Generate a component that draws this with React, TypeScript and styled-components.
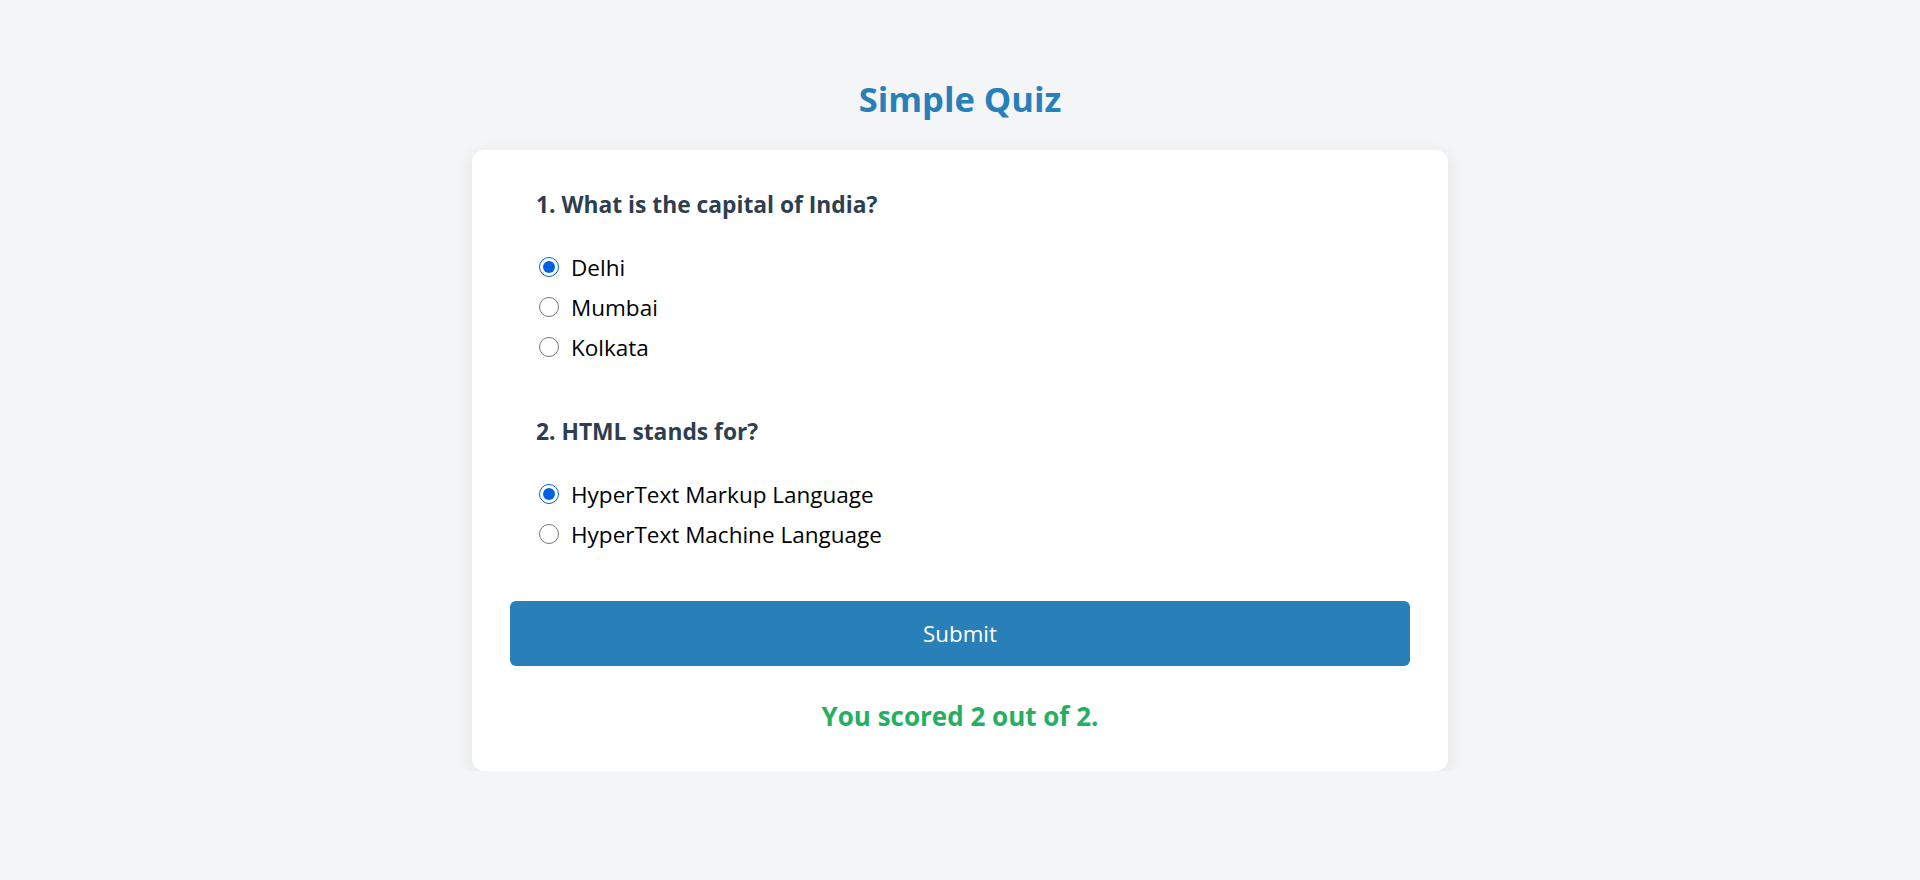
import React from "react";
import styled, { createGlobalStyle } from "styled-components";

const GlobalStyle = createGlobalStyle`
  html, body {
    margin: 0;
    padding: 0;
    background: #f4f5f7;
    font-family: "Open Sans", "Noto Sans", sans-serif;
  }
`;

const Page = styled.main`
  display: flex;
  flex-direction: column;
  align-items: center;
  padding-top: 74px;
`;

const Title = styled.h1`
  margin: 0 0 26px;
  height: 50px;
  line-height: 50px;
  font-size: 34.5px;
  font-weight: 700;
  color: #2980b9;
`;

const Card = styled.section`
  box-sizing: border-box;
  width: 976px;
  background: #ffffff;
  border-radius: 12px;
  box-shadow: 0 4px 18px rgba(0, 0, 0, 0.08);
  padding: 40px 38px 40px;
  display: flex;
  flex-direction: column;
`;

const QuestionBlock = styled.div<{ $gapAfter: number }>`
  padding: 0 26px;
  margin-bottom: ${(p) => p.$gapAfter}px;
`;

const QuestionText = styled.p`
  margin: 0 0 27px;
  height: 30px;
  line-height: 30px;
  font-size: 22.8px;
  font-weight: 700;
  color: #2c3e50;
`;

const Option = styled.label`
  display: flex;
  align-items: center;
  height: 40px;
  font-size: 22.5px;
  color: #000000;
  cursor: pointer;
`;

const Radio = styled.input`
  width: 20px;
  height: 20px;
  margin: 0 12px 0 3px;
  accent-color: #0060df;
`;

const SubmitButton = styled.button`
  height: 65px;
  width: 100%;
  border: none;
  border-radius: 6px;
  background: #2980b9;
  color: #ffffff;
  font-family: "Open Sans", "Noto Sans", sans-serif;
  font-size: 22.3px;
  cursor: pointer;
`;

const Score = styled.p`
  margin: 35px 0 0;
  height: 30px;
  line-height: 30px;
  text-align: center;
  font-size: 26px;
  font-weight: 700;
  color: #27ae60;
`;

const questions = [
  {
    q: "1. What is the capital of India?",
    name: "q1",
    options: ["Delhi", "Mumbai", "Kolkata"],
    selected: 0,
    gap: 50,
  },
  {
    q: "2. HTML stands for?",
    name: "q2",
    options: ["HyperText Markup Language", "HyperText Machine Language"],
    selected: 0,
    gap: 47,
  },
];

export default function App() {
  return (
    <>
      <GlobalStyle />
      <Page>
        <Title>Simple Quiz</Title>
        <Card>
          {questions.map((item) => (
            <QuestionBlock key={item.name} $gapAfter={item.gap}>
              <QuestionText>{item.q}</QuestionText>
              {item.options.map((opt, i) => (
                <Option key={opt}>
                  <Radio
                    type="radio"
                    name={item.name}
                    defaultChecked={i === item.selected}
                  />
                  {opt}
                </Option>
              ))}
            </QuestionBlock>
          ))}
          <SubmitButton type="button">Submit</SubmitButton>
          <Score>You scored 2 out of 2.</Score>
        </Card>
      </Page>
    </>
  );
}
